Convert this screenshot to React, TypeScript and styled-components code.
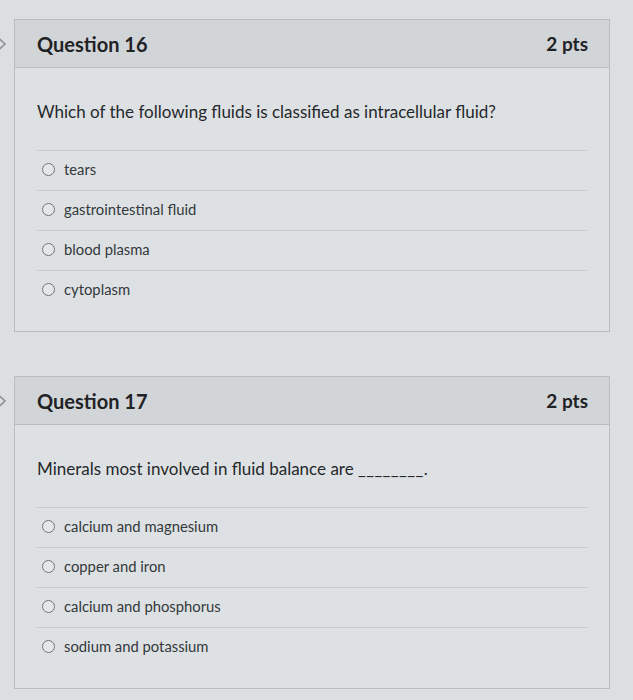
import React from "react";
import styled, { createGlobalStyle } from "styled-components";

const Global = createGlobalStyle`
  html, body { margin: 0; padding: 0; background: #dcdfe1; }
  body { font-family: Lato, "Open Sans", sans-serif; color: #2b2f33; }
`;

const Page = styled.div`
  width: 633px;
  height: 700px;
  box-sizing: border-box;
  padding: 19px 23px 0 14px;
  display: flex;
  flex-direction: column;
  gap: 44px;
  overflow: hidden;
`;

const Block = styled.section`
  position: relative;
`;

const Chevron = styled.svg`
  position: absolute;
  left: -20px;
  top: 16px;
  width: 14px;
  height: 18px;
`;

const Card = styled.div`
  border: 1px solid #b9bdc0;
  background: #dee1e3;
`;

const Header = styled.header`
  height: 48px;
  box-sizing: border-box;
  padding: 0 21px 0 22px;
  display: flex;
  align-items: center;
  justify-content: space-between;
  background: #d2d5d7;
  border-bottom: 1px solid #b9bdc0;
  font-size: 20px;
  font-weight: 700;
  color: #1f2326;
`;

const Points = styled.span`
  font-size: 19px;
`;

const Body = styled.div`
  padding: 31px 22px 21px 22px;
`;

const Prompt = styled.p`
  margin: 0 0 26px 0;
  font-size: 17px;
  line-height: 25px;
  color: #25292c;
`;

const Answers = styled.ul`
  list-style: none;
  margin: 0;
  padding: 0;
`;

const Answer = styled.li`
  height: 40px;
  box-sizing: border-box;
  border-top: 1px solid #c9cdd0;
  display: flex;
  align-items: center;
  gap: 9px;
  padding: 0 0 3px 5px;
  font-size: 14.8px;
  color: #33383c;
`;

const Radio = styled.span`
  width: 13px;
  height: 13px;
  box-sizing: border-box;
  border-radius: 50%;
  border: 1.5px solid #6f7478;
  background: #e4e7e9;
  flex: none;
`;

const Blank = styled.span`
  letter-spacing: 0.4px;
`;

type Q = { num: number; prompt: React.ReactNode; answers: string[] };

const questions: Q[] = [
  {
    num: 16,
    prompt: "Which of the following fluids is classified as intracellular fluid?",
    answers: ["tears", "gastrointestinal fluid", "blood plasma", "cytoplasm"],
  },
  {
    num: 17,
    prompt: (
      <>
        Minerals most involved in fluid balance are <Blank>________</Blank>.
      </>
    ),
    answers: [
      "calcium and magnesium",
      "copper and iron",
      "calcium and phosphorus",
      "sodium and potassium",
    ],
  },
];

export default function App() {
  return (
    <>
      <Global />
      <Page>
        {questions.map((q) => (
          <Block key={q.num}>
            <Chevron viewBox="0 0 14 18">
              <path d="M3 1.5 L11 9 L3 16.5" fill="none" stroke="#8d9296" strokeWidth="1.6" />
            </Chevron>
            <Card>
              <Header>
                <span>Question {q.num}</span>
                <Points>2 pts</Points>
              </Header>
              <Body>
                <Prompt>{q.prompt}</Prompt>
                <Answers>
                  {q.answers.map((a) => (
                    <Answer key={a}>
                      <Radio />
                      <span>{a}</span>
                    </Answer>
                  ))}
                </Answers>
              </Body>
            </Card>
          </Block>
        ))}
      </Page>
    </>
  );
}
